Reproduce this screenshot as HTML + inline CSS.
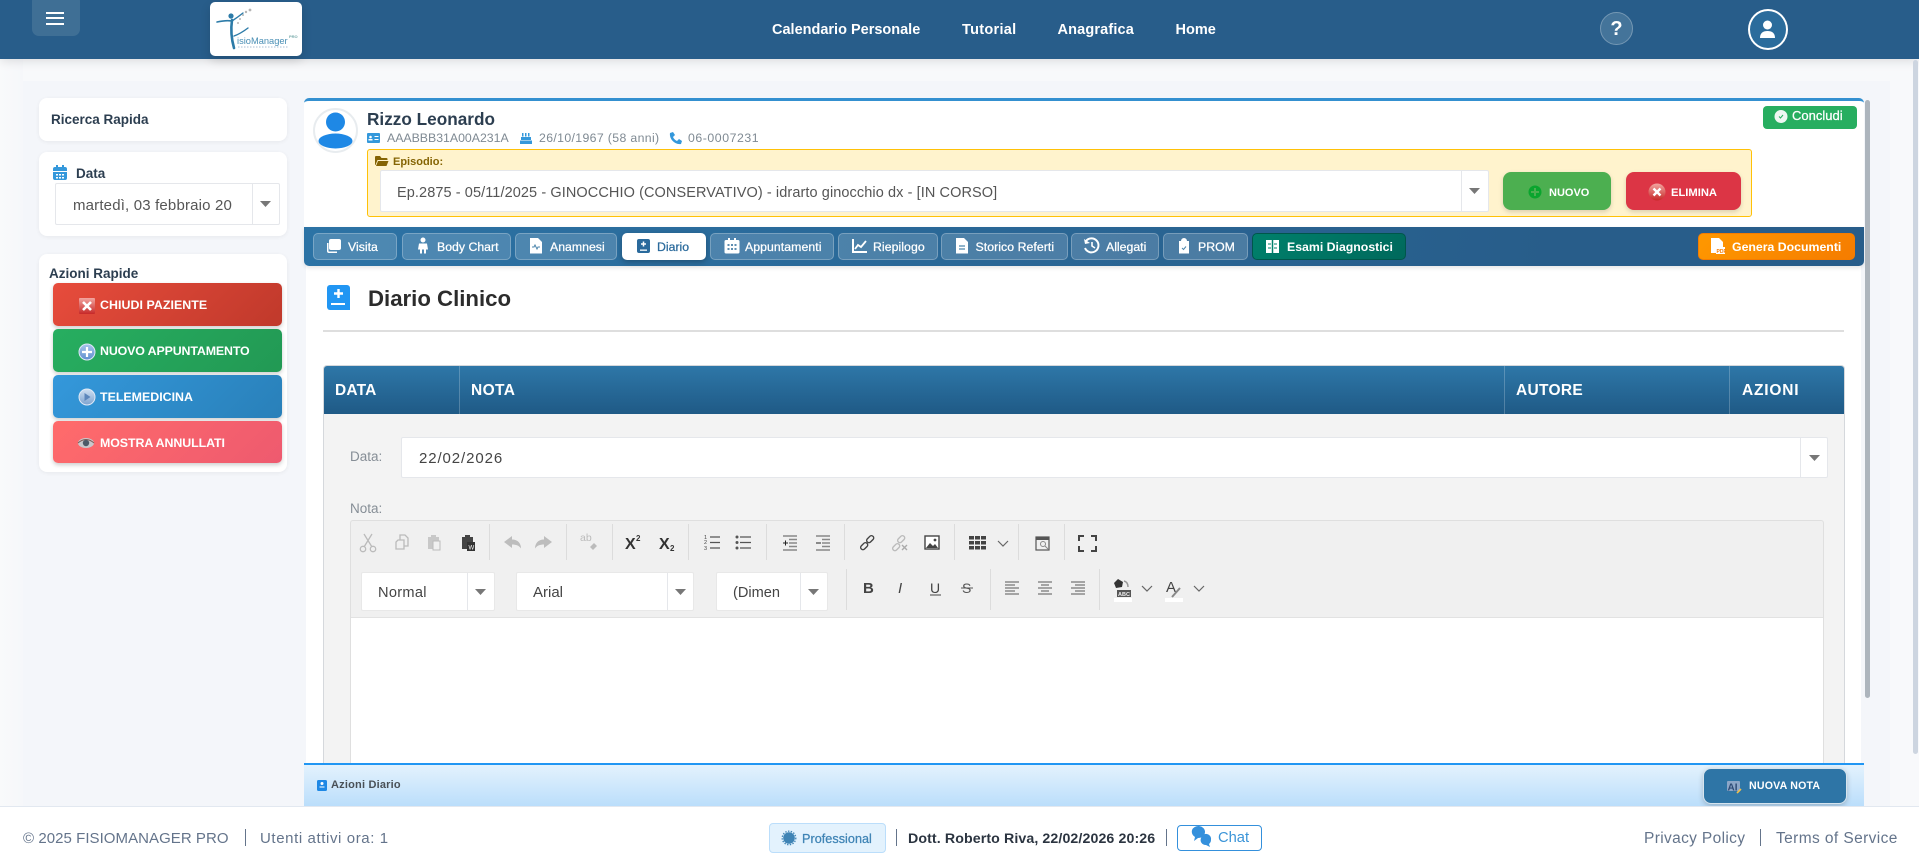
<!DOCTYPE html>
<html lang="it"><head><meta charset="utf-8"><title>Diario Clinico</title>
<style>
*{box-sizing:border-box}
html,body{margin:0;padding:0;width:1919px;height:866px;overflow:hidden;background:#f8f9fb;font-family:"Liberation Sans",sans-serif}
.a{position:absolute}
.t{position:absolute;white-space:nowrap;line-height:20px;margin-top:1px}
.b{font-weight:700}
.m{-webkit-text-stroke:.25px currentColor}
.card{position:absolute;background:#fff;border-radius:8px;box-shadow:0 1px 4px rgba(0,0,0,.06)}
.sel{position:absolute;background:#fff;border:1px solid #e5e7eb;border-radius:2px}
.sel i{position:absolute;top:0;bottom:0;width:1px;background:#e5e7eb}
.tab{position:absolute;top:233px;height:27px;background:rgba(255,255,255,.16);border:1px solid rgba(255,255,255,.25);border-radius:5px}
.act{position:absolute;left:53px;width:229px;border-radius:5px;box-shadow:0 2px 4px rgba(0,0,0,.2)}
.sep{position:absolute;width:1px;background:#dcdcdc}
.th{position:absolute;top:366px;width:1px;height:48px;background:rgba(255,255,255,.22)}
.f{color:#64748b;font-size:15px}
.v{position:absolute;width:1px;background:#64748b;top:829px;height:17px}
</style></head><body>

<div class="a" style="left:0;top:59px;width:23px;height:747px;background:linear-gradient(90deg,#f9fafb,#f6f7fa)"></div>
<div class="a" style="left:23px;top:81px;width:1867px;height:725px;background:#f4f6fa"></div>

<!-- header -->
<div class="a" style="left:0;top:0;width:1919px;height:59px;background:#285d8a;box-shadow:0 2px 10px rgba(0,0,0,.12)"></div>
<div class="a" style="left:32px;top:-6px;width:48px;height:42px;border-radius:7px;background:#3f6f95"></div>
<div class="a" style="left:46px;top:12px;width:18px;height:2px;background:#fff"></div>
<div class="a" style="left:46px;top:17px;width:18px;height:2px;background:#fff"></div>
<div class="a" style="left:46px;top:23px;width:18px;height:2px;background:#fff"></div>
<div class="a" style="left:210px;top:2px;width:92px;height:54px;background:#fff;border-radius:5px;box-shadow:0 4px 10px rgba(0,0,0,.15)"></div>
<div class="t" style="left:237px;top:30px;font-size:9.300px;color:#4a8fb5">isioManager</div>
<div class="t" style="left:289px;top:26px;font-size:4px;color:#7aa;font-weight:700">PRO</div>
<div class="t b" style="left:772px;top:19px;font-size:14.5px;color:#fff">Calendario Personale</div>
<div class="t b" style="left:962px;top:19px;font-size:14.5px;letter-spacing:.3px;color:#fff">Tutorial</div>
<div class="t b" style="left:1057.500px;top:19px;font-size:14.5px;letter-spacing:.15px;color:#fff">Anagrafica</div>
<div class="t b" style="left:1175.500px;top:19px;font-size:14.5px;color:#fff">Home</div>
<div class="a" style="left:1600px;top:12px;width:33px;height:33px;border-radius:50%;background:#44749a;border:1px solid #7598b4"></div>
<div class="t b" style="left:1600px;top:18px;width:33px;text-align:center;font-size:20px;color:#fff">?</div>
<div class="a" style="left:1747.500px;top:9px;width:40px;height:41px;border-radius:50%;background:#2b6c9c;border:2px solid #fff"></div>

<!-- sidebar -->
<div class="card" style="left:39px;top:98px;width:248px;height:43px"></div>
<div class="t b" style="left:51px;top:109px;font-size:13.5px;color:#2c3e50">Ricerca Rapida</div>
<div class="card" style="left:39px;top:152px;width:248px;height:84px"></div>
<div class="t b" style="left:76px;top:163px;font-size:13.5px;color:#2c3e50">Data</div>
<div class="sel" style="left:55px;top:183px;width:225px;height:42px"><i style="left:196px"></i></div>
<div class="t" style="left:73px;top:195px;font-size:15px;letter-spacing:.17px;color:#555">martedì, 03 febbraio 20</div>
<div class="card" style="left:39px;top:254px;width:248px;height:218px"></div>
<div class="t b" style="left:49px;top:263px;font-size:13.5px;color:#2c3e50">Azioni Rapide</div>
<div class="act" style="top:283px;height:43px;background:linear-gradient(135deg,#e74c3c,#c0392b)"></div>
<div class="act" style="top:329px;height:43px;background:linear-gradient(135deg,#27ae60,#229954)"></div>
<div class="act" style="top:375px;height:43px;background:linear-gradient(135deg,#3498db,#2980b9)"></div>
<div class="act" style="top:421px;height:42px;background:linear-gradient(135deg,#ff6b6b,#ee5a6f)"></div>
<div class="t b" style="left:100px;top:294px;font-size:12.4px;letter-spacing:.05px;color:#fff">CHIUDI PAZIENTE</div>
<div class="t b" style="left:100px;top:340px;font-size:12.4px;letter-spacing:-.13px;color:#fff">NUOVO APPUNTAMENTO</div>
<div class="t b" style="left:100px;top:386px;font-size:12.4px;color:#fff">TELEMEDICINA</div>
<div class="t b" style="left:100px;top:432px;font-size:12.4px;letter-spacing:-.08px;color:#fff">MOSTRA ANNULLATI</div>

<!-- main -->
<div class="a" style="left:306px;top:100px;width:1555px;height:663px;background:#fff"></div>
<div class="a" style="left:304px;top:98px;width:1560px;height:130px;background:#fff;border-top:3px solid #3490d0;border-radius:5px 5px 0 0"></div>
<div class="a" style="left:313px;top:108px;width:45px;height:45px;border-radius:50%;background:#fff;border:2px solid #e8ecef"></div>
<div class="t b" style="left:367px;top:108px;font-size:17.2px;color:#2c3e50">Rizzo Leonardo</div>
<div class="t" style="left:387px;top:127px;font-size:12.3px;color:#7f8a93">AAABBB31A00A231A</div>
<div class="t" style="left:539px;top:127px;font-size:12.3px;letter-spacing:.35px;color:#7f8a93">26/10/1967 (58 anni)</div>
<div class="t" style="left:688px;top:127px;font-size:12.3px;letter-spacing:.55px;color:#7f8a93">06-0007231</div>
<div class="a" style="left:367px;top:149px;width:1385px;height:68px;background:#fff3cd;border:1.5px solid #ffc107;border-radius:3px"></div>
<div class="t b" style="left:393px;top:151px;font-size:11px;color:#856404">Episodio:</div>
<div class="sel" style="left:380px;top:170px;width:1109px;height:42px"><i style="left:1080px"></i></div>
<div class="t" style="left:397px;top:182px;font-size:14.5px;letter-spacing:.09px;color:#555">Ep.2875 - 05/11/2025 - GINOCCHIO (CONSERVATIVO) - idrarto ginocchio dx - [IN CORSO]</div>
<div class="a" style="left:1503px;top:172px;width:108px;height:38px;background:#4caf50;border-radius:8px;box-shadow:0 2px 5px rgba(0,0,0,.15)"></div>
<div class="t b" style="left:1549px;top:182px;font-size:11px;color:#fff">NUOVO</div>
<div class="a" style="left:1626px;top:172px;width:115px;height:38px;background:#dc3545;border-radius:8px;box-shadow:0 2px 5px rgba(0,0,0,.15)"></div>
<div class="t b" style="left:1671px;top:182px;font-size:11.2px;color:#fff">ELIMINA</div>
<div class="a" style="left:1762.500px;top:106px;width:94px;height:23px;background:#27ae60;border-radius:4px"></div>
<div class="t m" style="left:1792px;top:105px;font-size:13px;color:#fff">Concludi</div>

<!-- tabs -->
<div class="a" style="left:304px;top:227px;width:1560px;height:39px;background:linear-gradient(100deg,#2c73a5,#285d8a 80%);border-radius:0 0 5px 5px;box-shadow:0 2px 4px rgba(0,0,0,.1)"></div>
<div class="tab" style="left:313px;width:84px"></div>
<div class="tab" style="left:402px;width:109px"></div>
<div class="tab" style="left:515px;width:102px"></div>
<div class="tab" style="left:622px;width:84px;background:#fff;border-color:#fff;box-shadow:0 2px 6px rgba(0,0,0,.25)"></div>
<div class="tab" style="left:710px;width:124px"></div>
<div class="tab" style="left:838px;width:100px"></div>
<div class="tab" style="left:941px;width:127px"></div>
<div class="tab" style="left:1071px;width:88px"></div>
<div class="tab" style="left:1163px;width:85px"></div>
<div class="tab" style="left:1252px;width:154px;background:linear-gradient(135deg,#00806b,#00695c);border-color:#00564b"></div>
<div class="tab" style="left:1698px;width:157px;background:linear-gradient(135deg,#ff9800,#f57c00);border-color:#f57c00"></div>
<div class="t m" style="left:348px;top:236px;font-size:12.3px;color:#fff">Visita</div>
<div class="t m" style="left:437px;top:236px;font-size:12.3px;color:#fff">Body Chart</div>
<div class="t m" style="left:550px;top:236px;font-size:12.3px;color:#fff">Anamnesi</div>
<div class="t m" style="left:657px;top:236px;font-size:12.3px;color:#2a6a9c">Diario</div>
<div class="t m" style="left:745px;top:236px;font-size:12.3px;letter-spacing:.05px;color:#fff">Appuntamenti</div>
<div class="t m" style="left:873px;top:236px;font-size:12.3px;letter-spacing:.05px;color:#fff">Riepilogo</div>
<div class="t m" style="left:975.500px;top:236px;font-size:12.3px;letter-spacing:.05px;color:#fff">Storico Referti</div>
<div class="t m" style="left:1106px;top:236px;font-size:12.3px;color:#fff">Allegati</div>
<div class="t m" style="left:1198px;top:236px;font-size:12.3px;color:#fff">PROM</div>
<div class="t b" style="left:1287px;top:236px;font-size:12.3px;color:#fff">Esami Diagnostici</div>
<div class="t b" style="left:1732px;top:236px;font-size:12.3px;color:#fff">Genera Documenti</div>

<!-- title -->
<div class="t b" style="left:368px;top:288px;font-size:22.2px;color:#2c2c2c">Diario Clinico</div>
<div class="a" style="left:323px;top:330px;width:1521px;height:2px;background:#dedede"></div>

<!-- table -->
<div class="a" style="left:323px;top:365px;width:1522px;height:398px;background:#f3f3f3;border:1px solid #d5d8dc;border-bottom:0;border-radius:4px 4px 0 0"></div>
<div class="a" style="left:324px;top:366px;width:1520px;height:48px;background:linear-gradient(180deg,#2e77a8,#1f5a86);border-radius:3px 3px 0 0"></div>
<div class="th" style="left:459px"></div><div class="th" style="left:1504px"></div><div class="th" style="left:1729px"></div>
<div class="t b" style="left:335px;top:380px;font-size:15.5px;letter-spacing:.2px;color:#fff">DATA</div>
<div class="t b" style="left:471px;top:380px;font-size:15.5px;letter-spacing:.4px;color:#fff">NOTA</div>
<div class="t b" style="left:1516px;top:380px;font-size:15.5px;letter-spacing:.3px;color:#fff">AUTORE</div>
<div class="t b" style="left:1742px;top:380px;font-size:15.5px;letter-spacing:.8px;color:#fff">AZIONI</div>
<div class="t" style="left:350px;top:446px;font-size:13.5px;color:#868e96">Data:</div>
<div class="sel" style="left:401px;top:437px;width:1427px;height:41px"><i style="left:1398px"></i></div>
<div class="t" style="left:419px;top:448px;font-size:15px;letter-spacing:.9px;color:#444">22/02/2026</div>
<div class="t" style="left:350px;top:498px;font-size:13.5px;color:#868e96">Nota:</div>

<!-- editor -->
<div class="a" style="left:350px;top:520px;width:1474px;height:243px;background:#f0f0f0;border:1px solid #dfdfdf;border-bottom:0;border-radius:3px 3px 0 0"></div>
<div class="a" style="left:351px;top:617px;width:1472px;height:146px;background:#fff;border-top:1px solid #e2e2e2"></div>
<div class="sep" style="left:489px;top:524px;height:36px"></div>
<div class="sep" style="left:566px;top:524px;height:36px"></div>
<div class="sep" style="left:612px;top:524px;height:36px"></div>
<div class="sep" style="left:688px;top:524px;height:36px"></div>
<div class="sep" style="left:766px;top:524px;height:36px"></div>
<div class="sep" style="left:844px;top:524px;height:36px"></div>
<div class="sep" style="left:954px;top:524px;height:36px"></div>
<div class="sep" style="left:1018px;top:524px;height:36px"></div>
<div class="sep" style="left:1064px;top:524px;height:36px"></div>
<div class="sep" style="left:846px;top:569px;height:41px"></div>
<div class="sep" style="left:990px;top:569px;height:41px"></div>
<div class="sep" style="left:1099px;top:569px;height:41px"></div>
<div class="sel" style="left:361px;top:572px;width:134px;height:39px;border-color:#e8e8e8"><i style="left:105px"></i></div>
<div class="sel" style="left:516px;top:572px;width:178px;height:39px;border-color:#e8e8e8"><i style="left:150px"></i></div>
<div class="sel" style="left:716px;top:572px;width:112px;height:39px;border-color:#e8e8e8"><i style="left:83px"></i></div>
<div class="t" style="left:378px;top:582px;font-size:14.6px;letter-spacing:.3px;color:#444">Normal</div>
<div class="t" style="left:533px;top:582px;font-size:15px;color:#444">Arial</div>
<div class="t" style="left:733px;top:582px;font-size:14.6px;color:#444">(Dimen</div>

<!-- bottom bar -->
<div class="a" style="left:304px;top:763px;width:1560px;height:43px;background:linear-gradient(180deg,#e3f2fd,#bbdefb);border-top:2px solid #2196f3"></div>
<div class="t b" style="left:331px;top:774px;font-size:11px;letter-spacing:.2px;color:#495057">Azioni Diario</div>
<div class="a" style="left:1703px;top:768px;width:144px;height:36px;background:#2e75a6;border:1px solid #d6e4ee;border-radius:8px;box-shadow:0 2px 6px rgba(0,0,0,.2)"></div>
<div class="t b" style="left:1749px;top:775px;font-size:10.6px;letter-spacing:.2px;color:#fff">NUOVA NOTA</div>

<!-- footer -->
<div class="a" style="left:0;top:806px;width:1919px;height:60px;background:#fff;border-top:1px solid #e2e8f0"></div>
<div class="t f" style="left:23px;top:828px;letter-spacing:.05px">© 2025 FISIOMANAGER PRO</div>
<div class="v" style="left:245px"></div>
<div class="t f" style="left:260px;top:828px;letter-spacing:.6px">Utenti attivi ora: 1</div>
<div class="a" style="left:769px;top:823px;width:117px;height:30px;background:#e3f2fd;border:1px solid #bbdefb;border-radius:4px"></div>
<div class="t m" style="left:802px;top:828px;font-size:12.6px;letter-spacing:.05px;color:#3f84b5">Professional</div>
<div class="v" style="left:896px"></div>
<div class="t b" style="left:908px;top:828px;font-size:14.2px;letter-spacing:.1px;color:#2b3440">Dott. Roberto Riva, 22/02/2026 20:26</div>
<div class="v" style="left:1166px"></div>
<div class="a" style="left:1177px;top:825px;width:85px;height:26px;background:#fff;border:1px solid #3490dc;border-radius:4px"></div>
<div class="t" style="left:1218px;top:827px;font-size:14.7px;color:#3a94d8">Chat</div>
<div class="t f" style="left:1644px;top:828px;font-size:15.5px;letter-spacing:.35px">Privacy Policy</div>
<div class="v" style="left:1760px"></div>
<div class="t f" style="left:1776px;top:828px;font-size:15.5px;letter-spacing:.4px">Terms of Service</div>

<!-- scrollbars -->
<div class="a" style="left:1865px;top:100px;width:5px;height:598px;background:#adb5bd;border-radius:3px"></div>
<div class="a" style="left:1913px;top:60px;width:5px;height:694px;background:#cdd5e0;border-radius:3px"></div>

<!-- icon layer -->
<svg class="a" style="left:0;top:0" width="1919" height="866" viewBox="0 0 1919 866" font-family="Liberation Sans, sans-serif">
<!-- logo figure -->
<g fill="none" stroke="#2c7ba8" stroke-linecap="round">
<circle cx="231" cy="16" r="2.6" fill="#2c7ba8" stroke="none"/>
<path d="M217 22 Q226 20 232 21" stroke-width="1.6"/>
<path d="M232 21 Q238 17 243 13" stroke-width="1.4"/>
<path d="M232 20 Q230 34 234 48" stroke-width="2.6"/>
<path d="M234 36 Q240 34 248 28" stroke-width="1.4"/>
</g>
<g fill="#b5b5b5"><circle cx="250" cy="10" r="1.4"/><circle cx="246" cy="12" r="1.2"/><circle cx="243" cy="15" r="1"/><circle cx="240" cy="19" r="1"/><circle cx="238" cy="23" r="1"/></g>
<path d="M238 47H289" stroke="#bcd" stroke-width="1.2" stroke-dasharray="1.5 1.5"/>
<!-- user icons header -->
<g fill="#fff"><circle cx="1767.500" cy="25" r="4.500"/><path d="M1760 38c0-5 3-7 7.500-7s7.500 2 7.500 7z"/></g>
<!-- calendar -->
<g fill="#3498db"><path d="M53 169a2 2 0 0 1 2-2h10a2 2 0 0 1 2 2v2H53zM53 172h14v6a2 2 0 0 1-2 2H55a2 2 0 0 1-2-2z"/><rect x="56" y="165" width="2" height="4"/><rect x="62" y="165" width="2" height="4"/></g>
<g fill="#fff"><rect x="56" y="174" width="2" height="1.500"/><rect x="59" y="174" width="2" height="1.500"/><rect x="62" y="174" width="2" height="1.500"/><rect x="56" y="177" width="2" height="1.500"/><rect x="59" y="177" width="2" height="1.500"/><rect x="62" y="177" width="2" height="1.500"/></g>
<path d="M260 201h11l-5.500 6z" fill="#777"/>
<path d="M1469 188h11l-5.500 6z" fill="#777"/>
<path d="M1809 455h11l-5.500 6z" fill="#777"/>
<path d="M475 589h11l-5.500 6z" fill="#777"/>
<path d="M675 589h11l-5.500 6z" fill="#777"/>
<path d="M808 589h11l-5.500 6z" fill="#777"/>
<!-- sidebar action icons -->
<defs>
<linearGradient id="gb" x1="0" y1="0" x2="0" y2="1"><stop offset="0" stop-color="#a8c4ea"/><stop offset="1" stop-color="#5f8fd0"/></linearGradient>
<linearGradient id="gp" x1="0" y1="0" x2="0" y2="1"><stop offset="0" stop-color="#cfe0f2"/><stop offset="1" stop-color="#7da2cf"/></linearGradient>
<linearGradient id="gr" x1="0" y1="0" x2="0" y2="1"><stop offset="0" stop-color="#f2a6a0"/><stop offset="1" stop-color="#c62828"/></linearGradient>
</defs>
<rect x="79" y="298" width="16" height="16" rx="1" fill="url(#gr)"/><path d="M83 302l8 8M91 302l-8 8" stroke="#fff" stroke-width="2.600"/>
<circle cx="87" cy="352" r="8" fill="url(#gb)" stroke="#dfe9f6"/><path d="M87 347v10M82 352h10" stroke="#fff" stroke-width="2.200"/>
<circle cx="87" cy="397" r="8" fill="url(#gp)" stroke="#dfe9f6"/><path d="M84.500 393l6 4-6 4z" fill="#5c86bb"/>
<ellipse cx="86" cy="443" rx="8" ry="5" fill="#c8c8cc"/><circle cx="86" cy="443" r="3.200" fill="#4d5a68"/><path d="M78 443q8-7 16 0" stroke="#7c5a55" fill="none"/>
<!-- avatar -->
<g fill="#1e88e5"><ellipse cx="335.500" cy="122" rx="9.500" ry="9.500"/><ellipse cx="335.500" cy="141" rx="17" ry="7.500"/></g>
<!-- sub info -->
<rect x="367" y="133" width="13" height="10" rx="1" fill="#3498db"/><g fill="#fff"><circle cx="370.500" cy="137" r="1.300"/><rect x="368.500" y="139" width="4" height="1.500"/><rect x="374.500" y="136" width="4" height="1"/><rect x="374.500" y="139" width="4" height="1"/></g>
<g fill="#3498db"><rect x="521" y="137" width="10" height="3"/><rect x="520" y="140.500" width="12" height="3.500"/><rect x="522" y="133" width="1.500" height="3.500"/><rect x="525" y="133" width="1.500" height="3.500"/><rect x="528" y="133" width="1.500" height="3.500"/></g>
<path d="M670 133l3-1 2 3-2 2c1 2 2 3 4 4l2-2 3 2-1 3c-6 1-12-5-11-11z" fill="#3498db"/>
<!-- folder -->
<path d="M375 157a1 1 0 0 1 1-1h4l1.500 2h5a1 1 0 0 1 1 1v1h-10l-2 5h-.500z" fill="#856404"/><path d="M378 161h10.500l-2 5H376z" fill="#856404"/>
<!-- nuovo / elimina -->
<circle cx="1535" cy="192" r="6.500" fill="#0aa52e"/><path d="M1535 188v8M1531 192h8" stroke="#4caf50" stroke-width="2"/>
<circle cx="1657" cy="192" r="8.500" fill="url(#gr)"/><path d="M1653.500 188.500l7 7M1660.500 188.500l-7 7" stroke="#fff" stroke-width="2.400"/>
<circle cx="1781" cy="116.500" r="6.500" fill="#eef7f2"/><path d="M1779 116.500l1.500 1.500 2.500-3" stroke="#27ae60" fill="none"/>
<!-- tab icons -->
<g fill="#fff">
<path d="M331 239h8a2 2 0 0 1 2 2v7a2 2 0 0 1-2 2h-8a2 2 0 0 1-2-2v-7a2 2 0 0 1 2-2z"/><path d="M327 243v8a2 2 0 0 0 2 2h8v-1.500h-8a.5.5 0 0 1-.5-.5v-8z"/>
<circle cx="423" cy="240" r="2.500"/><path d="M419 243.500h8l1 6h-2v4h-2v-4h-2v4h-2v-4h-2z"/>
<path d="M530 238h8l4 4v11.500h-12z"/>
<path d="M726 240h12a1.500 1.500 0 0 1 1.500 1.500V252a1.500 1.500 0 0 1-1.500 1.500h-12a1.500 1.500 0 0 1-1.500-1.500v-10.500A1.500 1.500 0 0 1 726 240z"/>
<rect x="728" y="238" width="2" height="4"/><rect x="734" y="238" width="2" height="4"/>
<path d="M852 239h2v12h13v2h-15z"/>
<path d="M956 238h8l4 4v11.500h-12z"/>
<path d="M1179 241h2a3 3 0 0 1 6 0h2v12.500h-10z"/>
</g>
<path d="M532 247h2l1-2 2 4 1-2h2" fill="none" stroke="#4d86ac" stroke-width="1"/>
<g fill="#5d8db0"><rect x="727.500" y="244" width="2" height="2"/><rect x="731" y="244" width="2" height="2"/><rect x="734.500" y="244" width="2" height="2"/><rect x="727.500" y="248" width="2" height="2"/><rect x="731" y="248" width="2" height="2"/><rect x="734.500" y="248" width="2" height="2"/></g>
<path d="M855 249l3-4 3 2 5-6" fill="none" stroke="#fff" stroke-width="1.800"/>
<path d="M959 246h6M959 249h6" stroke="#4d86ac" stroke-width="1.200"/>
<path d="M1182 248l1.500 1.500 2.500-3" stroke="#4d86ac" fill="none"/>
<path d="M1086 241a7 7 0 1 1-1 7" fill="none" stroke="#fff" stroke-width="2"/><path d="M1084 239l1 5 5-1z" fill="#fff"/><path d="M1092 242v4l3 2" fill="none" stroke="#fff" stroke-width="1.600"/>
<rect x="637" y="239" width="13" height="14" rx="2" fill="#2a6a9c"/><path d="M643.500 241.500v5M641 244h5" stroke="#fff" stroke-width="1.500"/><rect x="640" y="249.500" width="7" height="1.300" fill="#fff"/>
<rect x="1266" y="240" width="13" height="13" fill="#fff"/><path d="M1272.500 240v13" stroke="#00806b" stroke-width="1.500"/><path d="M1268 244h3M1268 248h3M1274 244h3M1274 248h3" stroke="#00806b"/>
<path d="M1711 238h8l4 4v6h-2v5h-10z" fill="#fff"/><rect x="1716" y="247" width="9" height="7" fill="#fff"/>
<text x="1716.500" y="253" font-size="5" font-weight="700" fill="#f57c00">PDF</text>
<!-- title icon -->
<path d="M330 285h17a3 3 0 0 1 3 3v22h-20a3 3 0 0 1-3-3v-19a3 3 0 0 1 3-3z" fill="#2196f3"/><path d="M338.500 289v9M334 293.500h9" stroke="#fff" stroke-width="2.400"/><rect x="331" y="303" width="14" height="2" fill="#fff"/>
<!-- toolbar row 1 -->
<g fill="none" stroke="#bbb" stroke-width="1.300">
<circle cx="363" cy="549" r="2.700"/><circle cx="373" cy="549" r="2.700"/><path d="M364 547l8-13M372 547l-8-13"/>
<path d="M398 540h6v9h-8v-7zM400 540v-5h5l3 3v8h-4"/>
</g>
<g fill="#c8c8c8"><path d="M428 537h3v-2h5v2h3v12h-11z"/></g><rect x="433" y="541" width="7" height="9" fill="#f0f0f0" stroke="#bbb"/>
<path d="M462 537h3v-2h5v2h3v12h-11z" fill="#444"/><rect x="467" y="542" width="8" height="9" fill="#333"/><text x="468.500" y="549.500" font-size="6" fill="#fff">W</text>
<path d="M504 542l8-6v3.500c6 0 9 4 9 9-2-3-5-4-9-4v3.500z" fill="#bdbdbd"/>
<path d="M552 542l-8-6v3.500c-6 0-9 4-9 9 2-3 5-4 9-4v3.500z" fill="#bdbdbd"/>
<text x="580" y="541" font-size="10.500" fill="#bbb">ab</text><path d="M590 547l4-4 3 3-4 4z" fill="#bbb"/>
<g font-weight="700" fill="#333"><text x="625" y="549" font-size="16">X</text><text x="636" y="541" font-size="8">2</text><text x="659" y="549" font-size="16">X</text><text x="670" y="551" font-size="8">2</text></g>
<g fill="#444" font-size="5.500"><text x="704" y="539">1</text><text x="704" y="544">2</text><text x="704" y="550">3</text></g>
<path d="M710 537h10M710 542.500h10M710 548h10M740 537h11M740 542.500h11M740 548h11" stroke="#555" stroke-width="1.300"/>
<g fill="#555"><circle cx="737" cy="537" r="1.500"/><circle cx="737" cy="542.500" r="1.500"/><circle cx="737" cy="548" r="1.500"/></g>
<path d="M783 536h14M789 539.500h8M789 543h8M789 546.500h8M783 550h14M816 536h14M822 539.500h8M822 543h8M822 546.500h8M816 550h14" stroke="#888" stroke-width="1.600"/>
<path d="M783 543h5M785.500 540.500v5M816 543h5" stroke="#222" stroke-width="1"/>
<g fill="none" stroke="#444" stroke-width="1.400"><rect x="860" y="544" width="8" height="4.500" rx="2.200" transform="rotate(-45 864 546)"/><rect x="866" y="537" width="8" height="4.500" rx="2.200" transform="rotate(-45 870 539)"/></g>
<g fill="none" stroke="#bbb" stroke-width="1.400"><rect x="892" y="545" width="8" height="4.500" rx="2.200" transform="rotate(-45 896 547)"/><rect x="897" y="537" width="8" height="4.500" rx="2.200" transform="rotate(-45 901 539)"/></g><path d="M902 545l5 5M907 545l-5 5" stroke="#aaa" stroke-width="1.400"/>
<rect x="925" y="536" width="14" height="13" fill="#fff" stroke="#444" stroke-width="1.400"/><path d="M926 548l4-5 3 3 2-2 3 4z" fill="#444"/><circle cx="935" cy="540" r="1.400" fill="#444"/>
<g fill="#444"><rect x="969" y="536" width="5" height="3.500"/><rect x="975" y="536" width="5" height="3.500"/><rect x="981" y="536" width="5" height="3.500"/><rect x="969" y="541" width="5" height="3.500"/><rect x="975" y="541" width="5" height="3.500"/><rect x="981" y="541" width="5" height="3.500"/><rect x="969" y="546" width="5" height="3.500"/><rect x="975" y="546" width="5" height="3.500"/><rect x="981" y="546" width="5" height="3.500"/></g>
<path d="M998 541l5 5 5-5" fill="none" stroke="#666" stroke-width="1.200"/>
<rect x="1036" y="537" width="13" height="13" fill="none" stroke="#555" stroke-width="1.200"/><rect x="1036" y="537" width="13" height="3" fill="#555"/><circle cx="1043" cy="544" r="2.500" fill="none" stroke="#888"/><path d="M1045 546l3 3" stroke="#888"/>
<path d="M1079 541v-5h5M1091 536h5v5M1096 546v5h-5M1084 551h-5v-5" fill="none" stroke="#444" stroke-width="2"/>
<!-- toolbar row 2 -->
<text x="863" y="593" font-size="15" font-weight="700" fill="#444">B</text>
<text x="898" y="593" font-size="15" font-style="italic" fill="#444">I</text>
<text x="930" y="593" font-size="14" fill="#444">U</text><path d="M930 595h11" stroke="#444"/>
<text x="962" y="593" font-size="14" fill="#555">S</text><path d="M961 588h12" stroke="#555"/>
<path d="M1005 582h14M1005 585h10M1005 588h14M1005 591h10M1005 594h14" stroke="#777" stroke-width="1.200"/>
<path d="M1038 582h14M1041 585h8M1038 588h14M1041 591h8M1038 594h14" stroke="#777" stroke-width="1.200"/>
<path d="M1071 582h14M1075 585h10M1071 588h14M1075 591h10M1071 594h14" stroke="#777" stroke-width="1.200"/>
<path d="M1114 583l4-4 5 3-1 5-6 1z" fill="#333"/><path d="M1124 581q4 1 4 6" stroke="#999" fill="none" stroke-width="1.500"/>
<rect x="1117" y="590" width="14" height="7" fill="#555"/><text x="1118" y="596" font-size="5.500" font-weight="700" fill="#eee">ABC</text><rect x="1114" y="598" width="18" height="4" fill="#fff"/>
<text x="1166" y="592" font-size="15" fill="#444">A</text><path d="M1172 597l8-9" stroke="#888" stroke-width="2"/><rect x="1165" y="598" width="18" height="4" fill="#fff"/>
<path d="M1142 586l5 5 5-5M1194 586l5 5 5-5" fill="none" stroke="#666" stroke-width="1.200"/>
<!-- bottom -->
<rect x="317" y="780" width="10" height="11" rx="1.500" fill="#1e88e5"/><rect x="319.500" y="786.500" width="5" height="1" fill="#fff"/><circle cx="322" cy="783.500" r="1.500" fill="#fff"/>
<rect x="1727" y="781" width="13" height="10" rx="1" fill="#8ca6c8"/><text x="1727.500" y="790.500" font-size="10" font-weight="700" fill="#2c4a75">AI</text><path d="M1737 793l4-4" stroke="#f2c14e" stroke-width="1.600"/>
<!-- footer -->
<circle cx="789" cy="838" r="5.800" fill="#3f84b5"/><circle cx="789" cy="838" r="6.800" fill="none" stroke="#3f84b5" stroke-width="1.300" stroke-dasharray="1.400 1.400"/>
<path d="M1192 829a7 6 0 0 1 7-4 7 6 0 0 1 6 6 7 6 0 0 1-7 6l-4 3 1-4a6 6 0 0 1-3-7z" transform="translate(0 1)" fill="#3490dc"/><path d="M1201 838a5 5 0 0 1 10 2c0 2-1 3-2 4l1 3-4-2a5 5 0 0 1-5-7z" fill="#3490dc"/>
</svg>
</body></html>
